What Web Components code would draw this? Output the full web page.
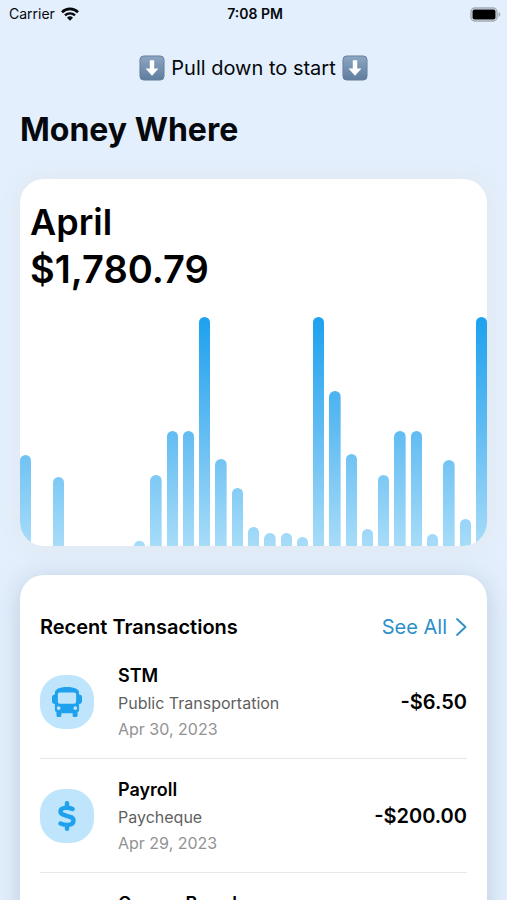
<!DOCTYPE html>
<html lang="en">
<head>
<meta charset="UTF-8">
<meta name="viewport" content="width=device-width, initial-scale=1">
<title>Money Where</title>
<style>
  html {
    height: 100%;
    overflow: hidden;
  }

  body {
    margin: 0;
    height: 100%;
    overflow: auto;
    scrollbar-width: none;
    background-color: #e3effd;
    color: #05080c;
    font-family: Inter, "Liberation Sans", sans-serif;
  }
</style>
</head>
<body>
<money-app></money-app>

<script>
class StatusBar extends HTMLElement {
  constructor() {
    super();
    this.attachShadow({ mode: 'open' });
  }

  connectedCallback() {
    this.shadowRoot.innerHTML = `
      <style>
        :host {
          display: grid;
          grid-template-columns: 1fr auto 1fr;
          align-items: center;
          height: 28px;
          padding: 0 6px 0 9px;
          font-size: 14px;
          line-height: 20px;
        }

        .carrier {
          display: flex;
          align-items: center;
          gap: 6px;
        }

        .time {
          font-weight: 600;
        }

        .battery {
          justify-self: end;
        }

        svg {
          display: block;
        }
      </style>

      <div class="carrier">
        <span>${this.getAttribute('carrier')}</span>
        <svg width="18" height="14" viewBox="0 0 18 14" fill="none" stroke="#05080c">
          <path d="M1 5.2a11.4 11.4 0 0 1 16 0" stroke-width="2.6"/>
          <path d="M4 8.4a7.1 7.1 0 0 1 10 0" stroke-width="2.4"/>
          <path d="M9 13.8l-3-3.1a4.3 4.3 0 0 1 6 0z" fill="#05080c" stroke="none"/>
        </svg>
      </div>
      <span class="time">${this.getAttribute('time')}</span>
      <svg class="battery" width="31" height="15" viewBox="0 0 31 15">
        <rect x="1" y="1" width="26" height="13" rx="4" fill="#e3effd" stroke="#a3a9b1" stroke-width="1.4"/>
        <rect x="2.5" y="2.5" width="23" height="10" rx="2" fill="#000"/>
        <path d="M28.5 5c2.4 1 2.4 4 0 5z" fill="#a3a9b1"/>
      </svg>
    `;
  }
}

class PullHint extends HTMLElement {
  constructor() {
    super();
    this.attachShadow({ mode: 'open' });
  }

  connectedCallback() {
    const arrow = `
      <svg width="26" height="26" viewBox="0 0 27 27">
        <defs>
          <linearGradient id="key" x1="0" y1="0" x2="0" y2="1">
            <stop offset="0" stop-color="#8ba7c3"/>
            <stop offset="1" stop-color="#607c9e"/>
          </linearGradient>
        </defs>
        <rect x="1" y="1" width="25" height="25" rx="4" fill="url(#key)" stroke="#687f99"/>
        <path d="M11.2 5.5h4.6v8.500h4.400L13.500 21.500 6.800 14h4.400z" fill="#fff"/>
      </svg>
    `;

    this.shadowRoot.innerHTML = `
      <style>
        :host {
          display: flex;
          justify-content: center;
          align-items: center;
          gap: 6px;
          font-size: 20px;
          line-height: 28px;
        }

        svg {
          display: block;
        }
      </style>

      ${arrow}
      <span><slot></slot></span>
      ${arrow}
    `;
  }
}

class SpendingChart extends HTMLElement {
  constructor() {
    super();
    this.attachShadow({ mode: 'open' });
  }

  connectedCallback() {
    const days = this.getAttribute('days').split(',');

    this.shadowRoot.innerHTML = `
      <style>
        :host {
          display: block;
          overflow: hidden;
          border-radius: 24px;
          background-color: #fff;
          box-shadow: 0 0 20px rgba(225, 229, 234, .9);
        }

        h2 {
          margin: 0;
          padding: 20px 10px 24px;
          color: #000;
          font-size: 38px;
          font-weight: 600;
          line-height: 47px;
        }

        .month,
        .total {
          display: block;
        }

        .month {
          font-size: 36px;
        }

        .bars {
          display: flex;
          align-items: flex-end;
          gap: 5px;
          height: 229px;
        }

        .bar {
          flex: 1;
          border-radius: 6px 6px 0 0;
          background: linear-gradient(#1da1ee, #62bcf2 50%, #a7dcf9) bottom / 100% 229px no-repeat;
        }
      </style>

      <h2>
        <span class="month">${this.getAttribute('month')}</span>
        <span class="total">${this.getAttribute('total')}</span>
      </h2>
      <div class="bars">
        ${days.map((day) => `<div class="bar" style="height: ${day}px"></div>`).join('')}
      </div>
    `;
  }
}

class TransactionItem extends HTMLElement {
  constructor() {
    super();
    this.attachShadow({ mode: 'open' });
  }

  connectedCallback() {
    this.shadowRoot.innerHTML = `
      <style>
        :host {
          display: grid;
          grid-template-columns: 54px 1fr auto;
          align-items: center;
          column-gap: 24px;
          padding: 16px 0;
          border-bottom: 1px solid #e8e8e9;
        }

        .icon {
          display: flex;
          justify-content: center;
          align-items: center;
          height: 54px;
          border-radius: 24px;
          background-color: #bfe5fc;
          color: #1fa1ee;
        }

        .details {
          min-height: 81px;
        }

        .name,
        .category,
        .date {
          display: block;
          font-size: 16px;
          line-height: 26px;
        }

        .name {
          color: #000;
          font-size: 18px;
          font-weight: 600;
          line-height: 29px;
        }

        .category {
          color: #5f5f60;
        }

        .date {
          color: #929293;
        }

        .amount {
          color: #000;
          font-size: 20px;
          font-weight: 600;
          line-height: 28px;
        }
      </style>

      <div class="icon"><slot name="icon"></slot></div>
      <div class="details">
        <span class="name">${this.getAttribute('name')}</span>
        <span class="category">${this.getAttribute('category') || ''}</span>
        <span class="date">${this.getAttribute('date') || ''}</span>
      </div>
      <span class="amount">${this.getAttribute('amount') || ''}</span>
    `;
  }
}

class RecentTransactions extends HTMLElement {
  constructor() {
    super();
    this.attachShadow({ mode: 'open' });
  }

  connectedCallback() {
    this.shadowRoot.innerHTML = `
      <style>
        :host {
          display: block;
          padding: 38px 20px 20px;
          border-radius: 24px;
          background-color: #fff;
          box-shadow: 0 4px 24px rgba(150, 168, 186, .5);
        }

        header {
          display: flex;
          justify-content: space-between;
          align-items: center;
          padding-bottom: 4px;
          line-height: 28px;
        }

        h2 {
          margin: 0;
          color: #000;
          font-size: 20px;
          font-weight: 600;
        }

        a {
          display: flex;
          align-items: center;
          gap: 8px;
          color: #2c8fc9;
          font-size: 20px;
          text-decoration: none;
        }
      </style>

      <header>
        <h2>Recent Transactions</h2>
        <a href="#all">See All
          <svg width="12" height="20" viewBox="0 0 12 20" fill="none" stroke="currentColor" stroke-width="1.8" stroke-linecap="round" stroke-linejoin="round">
            <path d="M2 2l8.500 8L2 18"/>
          </svg>
        </a>
      </header>
      <slot></slot>
    `;
  }
}

class MoneyApp extends HTMLElement {
  constructor() {
    super();
    this.attachShadow({ mode: 'open' });
  }

  connectedCallback() {
    this.shadowRoot.innerHTML = `
      <style>
        :host {
          display: block;
        }

        main {
          padding: 26px 20px;
        }

        h1 {
          margin: 24px 0 25px;
          font-size: 32px;
          font-weight: 700;
          line-height: 48px;
        }

        recent-transactions {
          margin-top: 29px;
        }

        svg {
          display: block;
        }
      </style>

      <status-bar carrier="Carrier" time="7:08 PM"></status-bar>
      <main>
        <pull-hint>Pull down to start</pull-hint>
        <h1>Money Where</h1>
        <spending-chart month="April" total="$1,780.79"
          days="91,0,69,0,0,0,0,5,71,115,115,229,87,58,19,13,13,9,229,155,92,17,71,115,115,12,86,27,229"></spending-chart>
        <recent-transactions>
          <transaction-item name="STM" category="Public Transportation" date="Apr 30, 2023" amount="-$6.50">
            <svg slot="icon" width="30" height="30" viewBox="0 0 512 512" fill="currentColor">
              <path fill-rule="evenodd" d="M256 0C390 0 462 40 462 96v32c28 0 50 20 50 44v76c0 24-20 40-50 40v96c0 24-8 38-26 48v48c0 22-12 32-32 32h-20c-22 0-32-12-32-32v-32H160v32c0 22-12 32-32 32h-20c-22 0-32-12-32-32v-48c-18-10-26-24-26-48v-96c-30 0-50-16-50-40v-76c0-24 22-44 50-44V96C50 40 122 0 256 0zM134 92c-22 0-34 12-34 34v126c0 22 12 34 34 34h244c22 0 34-12 34-34V126c0-22-12-34-34-34zM114 328a32 32 0 1 0 0 64 32 32 0 1 0 0-64zM398 328a32 32 0 1 0 0 64 32 32 0 1 0 0-64z"/>
            </svg>
          </transaction-item>
          <transaction-item name="Payroll" category="Paycheque" date="Apr 29, 2023" amount="-$200.00">
            <svg slot="icon" width="18" height="30" viewBox="0 0 18 30" fill="none" stroke="currentColor" stroke-width="4.4" stroke-linecap="round" stroke-linejoin="round">
              <path d="M14.500 8C10 6 2.500 6 2.500 10.500c0 5.500 13 3 13 9 0 5.500-8 5-13 3M9 2.200v4M9 24v3.800"/>
            </svg>
          </transaction-item>
          <transaction-item name="Groovy Brand"></transaction-item>
        </recent-transactions>
      </main>
    `;
  }
}

customElements.define('status-bar', StatusBar);
customElements.define('pull-hint', PullHint);
customElements.define('spending-chart', SpendingChart);
customElements.define('transaction-item', TransactionItem);
customElements.define('recent-transactions', RecentTransactions);
customElements.define('money-app', MoneyApp);
</script>
</body>
</html>
